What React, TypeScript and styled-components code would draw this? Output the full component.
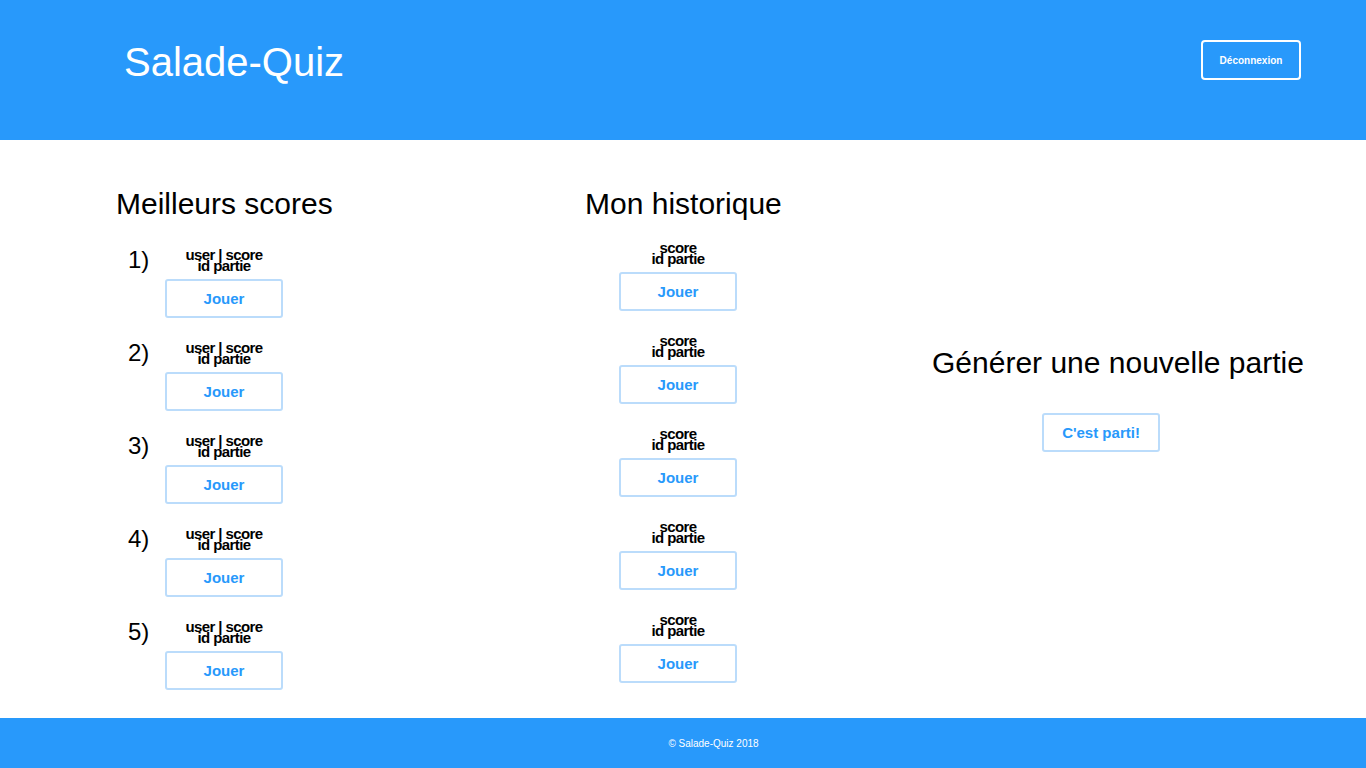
import * as React from 'react';
import styled, { createGlobalStyle } from 'styled-components';

const GlobalStyle = createGlobalStyle`
  body {
    margin: 0;
    font-family: "Liberation Sans", Arial, sans-serif;
    background: #ffffff;
    color: #000000;
  }
`;

const BLUE = '#2899fb';

const Page = styled.div`
  display: flex;
  flex-direction: column;
  width: 1366px;
  min-height: 768px;
`;

const Header = styled.header`
  display: flex;
  justify-content: space-between;
  align-items: flex-start;
  height: 140px;
  box-sizing: border-box;
  padding: 0 65px 0 124px;
  background: ${BLUE};
`;

const Brand = styled.h1`
  margin: 39px 0 0;
  font-size: 40px;
  font-weight: normal;
  line-height: 46px;
  color: #ffffff;
`;

const LogoutButton = styled.button`
  margin-top: 40px;
  width: 100px;
  height: 40px;
  border: 2px solid #ffffff;
  border-radius: 4px;
  background: transparent;
  color: #ffffff;
  font-family: inherit;
  font-size: 10px;
  font-weight: bold;
  cursor: pointer;
`;

const Main = styled.main`
  flex: 1;
  display: flex;
  padding: 47px 0 0 116px;
`;

const Column = styled.section<{ $width?: number; $top?: number }>`
  display: flex;
  flex-direction: column;
  width: ${(p) => (p.$width ? `${p.$width}px` : 'auto')};
  margin-top: ${(p) => p.$top || 0}px;
`;

const Heading = styled.h2`
  margin: 0;
  font-size: 30px;
  font-weight: normal;
  line-height: 34px;
  white-space: nowrap;
`;

const List = styled.ol<{ $offset: number; $indent: number }>`
  list-style: none;
  margin: 0;
  padding: ${(p) => p.$offset}px 0 0 ${(p) => p.$indent}px;
  display: flex;
  flex-direction: column;
  gap: 24px;
`;

const Row = styled.li`
  display: flex;
  align-items: flex-start;
`;

const Rank = styled.span`
  width: 37px;
  font-size: 24px;
  line-height: 22px;
`;

const Entry = styled.div`
  display: flex;
  flex-direction: column;
  align-items: center;
  width: 118px;
`;

const Caption = styled.div`
  font-size: 15px;
  font-weight: bold;
  letter-spacing: -0.6px;
  line-height: 11px;
  text-align: center;
  white-space: nowrap;
  margin-bottom: 8px;
`;

const PlayButton = styled.button`
  width: 118px;
  height: 39px;
  box-sizing: border-box;
  border: 2px solid #bbdcfb;
  border-radius: 3px;
  background: #ffffff;
  color: ${BLUE};
  font-family: inherit;
  font-size: 15px;
  font-weight: bold;
  cursor: pointer;
`;

const StartButton = styled(PlayButton)`
  margin: 33px 0 0 110px;
`;

const Footer = styled.footer`
  display: flex;
  align-items: center;
  justify-content: center;
  height: 50px;
  padding-left: 61px;
  background: ${BLUE};
  color: #ffffff;
  font-size: 10px;
`;

const best = [1, 2, 3, 4, 5];
const history = [1, 2, 3, 4, 5];

export default function App() {
  return (
    <Page>
      <GlobalStyle />
      <Header>
        <Brand>Salade-Quiz</Brand>
        <LogoutButton>Déconnexion</LogoutButton>
      </Header>
      <Main>
        <Column $width={469}>
          <Heading>Meilleurs scores</Heading>
          <List $offset={28} $indent={12}>
            {best.map((n) => (
              <Row key={n}>
                <Rank>{n})</Rank>
                <Entry>
                  <Caption>
                    user | score
                    <br />
                    id partie
                  </Caption>
                  <PlayButton>Jouer</PlayButton>
                </Entry>
              </Row>
            ))}
          </List>
        </Column>
        <Column $width={347}>
          <Heading>Mon historique</Heading>
          <List $offset={21} $indent={34}>
            {history.map((n) => (
              <Row key={n}>
                <Entry>
                  <Caption>
                    score
                    <br />
                    id partie
                  </Caption>
                  <PlayButton>Jouer</PlayButton>
                </Entry>
              </Row>
            ))}
          </List>
        </Column>
        <Column $top={159}>
          <Heading>Générer une nouvelle partie</Heading>
          <StartButton>C'est parti!</StartButton>
        </Column>
      </Main>
      <Footer>© Salade-Quiz 2018</Footer>
    </Page>
  );
}
